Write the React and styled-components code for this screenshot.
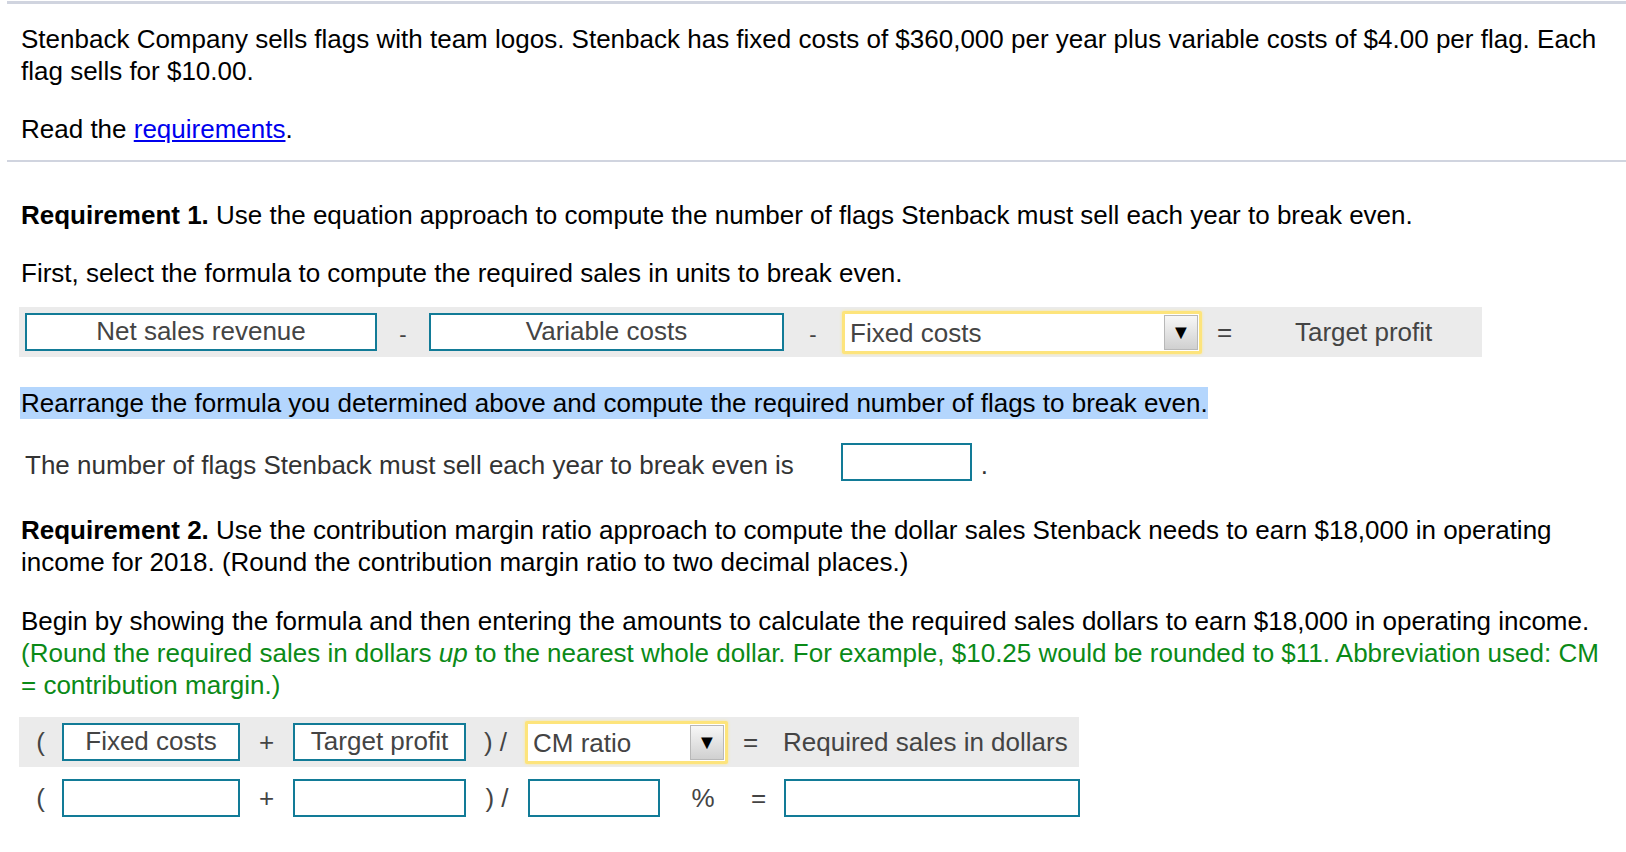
import React from "react";
import styled, { createGlobalStyle } from "styled-components";

const GlobalStyle = createGlobalStyle`
  body {
    margin: 0;
    background: #ffffff;
    font-family: "Liberation Sans", Arial, sans-serif;
    color: #000;
  }
`;

const Page = styled.div`
  padding: 0 0 30px 7px;
  font-size: 26px;
  line-height: 32px;
`;

const TopRule = styled.div`
  margin-top: 1px;
  border-top: 3px solid #d0d4df;
`;

const Intro = styled.div`
  padding: 19px 16px 15px 14px;
`;

const Para = styled.p`
  margin: ${(p) => p.$top || 0}px 0 0 0;
  color: ${(p) => p.$color || "#000"};
`;

const Link = styled.a`
  color: #0000ee;
  text-decoration: underline;
`;

const Divider = styled.hr`
  margin: 0;
  border: 0;
  border-top: 2px solid #d0d4df;
`;

const Body = styled.div`
  padding: 37px 16px 0 14px;
`;

const Green = styled.span`
  color: #0b8a17;
`;

const FormulaRow = styled.div`
  display: flex;
  align-items: center;
  width: ${(p) => p.$width}px;
  height: ${(p) => p.$height || 50}px;
  margin-top: ${(p) => p.$top || 0}px;
  margin-left: -2px;
  padding-left: ${(p) => p.$pad || 0}px;
  box-sizing: border-box;
  background: ${(p) => (p.$plain ? "transparent" : "#ebebeb")};
  color: #444;
`;

const Box = styled.div`
  box-sizing: border-box;
  width: ${(p) => p.$w}px;
  height: ${(p) => p.$h || 38}px;
  border: 2px solid #127b97;
  background: #fff;
  color: #444;
  text-align: center;
  line-height: ${(p) => (p.$h || 38) - 5}px;
  flex-shrink: 0;
`;

const Op = styled.span`
  display: inline-block;
  width: ${(p) => p.$w}px;
  text-align: center;
  flex-shrink: 0;
  font-size: ${(p) => p.$size || 26}px;
  padding-top: ${(p) => p.$down || 0}px;
`;

const Select = styled.div`
  box-sizing: border-box;
  display: flex;
  align-items: stretch;
  width: ${(p) => p.$w}px;
  height: 43px;
  border: 3px solid #fde47c;
  border-radius: 2px;
  box-shadow: 0 0 3px #fde98f;
  background: #fff;
  flex-shrink: 0;
`;

const SelectText = styled.span`
  flex: 1;
  padding-left: 5px;
  line-height: 38px;
  color: #444;
`;

const SelectButton = styled.span`
  width: 32px;
  margin: 1px 1px 1px 0;
  border: 1px solid #b8b8b8;
  background: linear-gradient(#f7f7f7, #d0d0d0);
  display: flex;
  align-items: center;
  justify-content: center;
  font-size: 20px;
  color: #000;
`;

const Plain = styled.span`
  flex-shrink: 0;
  margin-left: ${(p) => p.$ml || 0}px;
  padding-top: ${(p) => p.$down || 0}px;
`;

const Highlight = styled.div`
  display: inline-block;
  margin-top: 30px;
  margin-left: -1px;
  padding-left: 1px;
  background: #b4d6fd;
`;

const AnswerLine = styled.div`
  display: flex;
  align-items: center;
  margin-top: 24px;
  padding-left: 4px;
  color: #333;
`;

const Input = styled.div`
  box-sizing: border-box;
  width: ${(p) => p.$w}px;
  height: 38px;
  border: 2px solid #127b97;
  background: #fff;
  margin-left: ${(p) => p.$ml || 0}px;
  flex-shrink: 0;
`;

function Dropdown({ width, value }) {
  return (
    <Select $w={width}>
      <SelectText>{value}</SelectText>
      <SelectButton>▼</SelectButton>
    </Select>
  );
}

export default function App() {
  return (
    <>
      <GlobalStyle />
      <Page>
        <TopRule />
        <Intro>
          <Para>
            Stenback Company sells flags with team logos. Stenback has fixed
            costs of $360,000 per year plus variable costs of $4.00 per flag.
            Each flag sells for $10.00.
          </Para>
          <Para $top={26}>
            Read the <Link href="#">requirements</Link>.
          </Para>
        </Intro>
        <Divider />
        <Body>
          <Para>
            <b>Requirement 1.</b> Use the equation approach to compute the
            number of flags Stenback must sell each year to break even.
          </Para>
          <Para $top={26}>
            First, select the formula to compute the required sales in units to
            break even.
          </Para>

          <FormulaRow $width={1463} $top={18} $pad={6}>
            <Box $w={352}>Net sales revenue</Box>
            <Op $w={52} $size={22} $down={6}>-</Op>
            <Box $w={355}>Variable costs</Box>
            <Op $w={58} $size={22} $down={6}>-</Op>
            <Dropdown width={360} value="Fixed costs" />
            <Op $w={45}>=</Op>
            <Plain $ml={48}>Target profit</Plain>
          </FormulaRow>

          <Highlight>
            Rearrange the formula you determined above and compute the required
            number of flags to break even.
          </Highlight>

          <AnswerLine>
            <Plain $down={5}>
              The number of flags Stenback must sell each year to break even is
            </Plain>
            <Input $w={131} $ml={47} />
            <Plain $ml={9} $down={5}>.</Plain>
          </AnswerLine>

          <Para $top={33}>
            <b>Requirement 2.</b> Use the contribution margin ratio approach to
            compute the dollar sales Stenback needs to earn $18,000 in operating
            income for 2018. (Round the contribution margin ratio to two decimal
            places.)
          </Para>
          <Para $top={27}>
            Begin by showing the formula and then entering the amounts to
            calculate the required sales dollars to earn $18,000 in operating
            income.{" "}
            <Green>
              (Round the required sales in dollars <i>up</i> to the nearest
              whole dollar. For example, $10.25 would be rounded to $11.
              Abbreviation used: CM = contribution margin.)
            </Green>
          </Para>

          <FormulaRow $width={1060} $top={16}>
            <Op $w={43}>(</Op>
            <Box $w={178}>Fixed costs</Box>
            <Op $w={53}>+</Op>
            <Box $w={173}>Target profit</Box>
            <Op $w={59}>) /</Op>
            <Dropdown width={203} value="CM ratio" />
            <Op $w={45}>=</Op>
            <Plain $ml={10}>Required sales in dollars</Plain>
          </FormulaRow>

          <FormulaRow $width={1100} $height={50} $top={6} $plain>
            <Op $w={43}>(</Op>
            <Input $w={178} />
            <Op $w={53}>+</Op>
            <Input $w={173} />
            <Op $w={62}>) /</Op>
            <Input $w={132} />
            <Op $w={86}>%</Op>
            <Op $w={25}>=</Op>
            <Input $w={296} $ml={13} />
          </FormulaRow>
        </Body>
      </Page>
    </>
  );
}
